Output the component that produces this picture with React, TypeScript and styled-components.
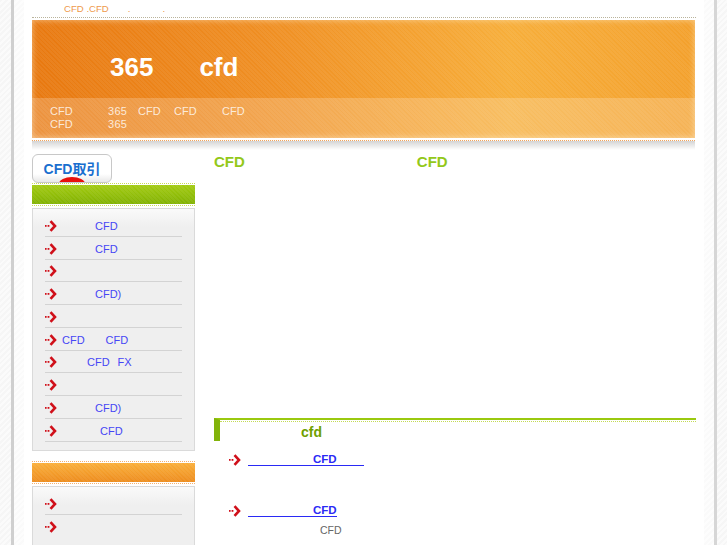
import React from 'react';
import styled, { createGlobalStyle } from 'styled-components';

const GlobalStyle = createGlobalStyle`
  html, body {
    margin: 0;
    padding: 0;
    height: 100%;
    overflow: hidden;
    background: #fff;
    font-family: 'Liberation Sans', Arial, sans-serif;
  }
`;

const stripes =
  'repeating-linear-gradient(45deg, rgba(255,255,255,0) 0 1px, rgba(255,255,255,0.06) 1px 3px)';

const Page = styled.div`
  height: 545px;
  overflow: hidden;
  padding-left: 11px;
  background: repeating-linear-gradient(135deg, #f6f6f6 0 2px, #fbfbfb 2px 4px);
`;

const Frame = styled.div`
  width: 680px;
  height: 545px;
  border-left: 3px solid #cfcfcf;
  border-right: 3px solid #d6d6d6;
  padding: 0 10px;
  background: repeating-linear-gradient(135deg, #fafafa 0 2px, #fdfdfd 2px 4px);
`;

const Inner = styled.div`
  height: 545px;
  padding: 0 9px 0 8px;
  background: #fff;
  box-sizing: border-box;
`;

const TopLine = styled.div`
  height: 17px;
  margin-right: -1px;
  border-bottom: 1px dotted #b9b39b;
  padding-left: 32px;
  font-size: 9.6px;
  line-height: 17px;
  color: #ee9a4d;
  display: flex;
`;

const Dot = styled.span<{ $at: number }>`
  margin-left: ${({ $at }) => $at}px;
`;

const Banner = styled.header`
  margin-top: 2px;
  height: 118px;
  display: flex;
  flex-direction: column;
  background: ${stripes}, linear-gradient(90deg, #e8780f 0%, #ef8e22 35%, #f7ae3a 72%, #f3a02c 100%);
  box-shadow: inset 0 0 6px 0 rgba(255, 236, 205, 0.6);
`;

const BannerTitle = styled.div`
  height: 78px;
  display: flex;
  align-items: center;
  padding: 16px 0 0 78px;
  box-sizing: border-box;
  font-size: 26px;
  font-weight: 700;
  color: #fff;
`;

const TitleGap = styled.span`
  width: 46px;
`;

const BannerNav = styled.nav`
  height: 40px;
  padding: 7px 0 0 18px;
  box-sizing: border-box;
  background: rgba(255, 255, 255, 0.2);
  color: rgba(255, 255, 255, 0.8);
  line-height: 13px;
`;

const NavRow = styled.div`
  display: flex;
`;

const NavItem = styled.span<{ $width: number; $small?: boolean }>`
  width: ${({ $width }) => $width}px;
  font-size: 11px;
  letter-spacing: ${({ $small }) => ($small ? '0.3px' : '0')};
`;

const BannerFoot = styled.div`
  margin-top: 2px;
  height: 9px;
  border-top: 1px dotted #f2a45c;
  background: linear-gradient(#d4d4d4, #fff);
`;

const Columns = styled.div`
  display: flex;
  margin-top: 4px;
`;

const Sidebar = styled.aside`
  width: 163px;
  flex: none;
`;

const Logo = styled.div`
  position: relative;
  width: 78px;
  height: 27px;
  border: 1px solid #c8c8c8;
  border-radius: 6px;
  overflow: hidden;
  background: linear-gradient(#fff 70%, #e8e8e8);
  color: #1a6fcf;
  font-size: 14px;
  font-weight: 700;
  line-height: 29px;
  text-align: center;
  font-family: 'Liberation Sans', 'Noto Sans CJK JP', sans-serif;
`;

const LogoArc = styled.span`
  position: absolute;
  left: 26px;
  bottom: -8px;
  width: 26px;
  height: 13px;
  border-radius: 50%;
  background: #e8100c;
`;

const SideBar = styled.div<{ $tone: 'green' | 'orange' }>`
  height: 19px;
  background: ${stripes},
    ${({ $tone }) =>
      $tone === 'green'
        ? 'linear-gradient(#a4cc12, #7fb000)'
        : 'linear-gradient(#fbb03a, #ec8a1c)'};
  border-top: 1px dotted ${({ $tone }) => ($tone === 'green' ? '#c9dc55' : '#f6b06e')};
  border-bottom: 1px dotted ${({ $tone }) => ($tone === 'green' ? '#c9dc55' : '#f6b06e')};
  padding: 1px 0;
  background-clip: content-box;
`;

const Box = styled.div<{ $height: number }>`
  margin-top: 2px;
  height: ${({ $height }) => $height}px;
  box-sizing: border-box;
  border: 1px solid #dadada;
  background: linear-gradient(#fafafa, #efefef 18px);
  padding: 5px 12px 0;
`;

const OrangeBar = styled(SideBar)`
  margin-top: 10px;
`;

const Row = styled.a<{ $open?: boolean }>`
  height: 22.75px;
  box-sizing: border-box;
  padding-top: 2px;
  display: flex;
  align-items: center;
  border-bottom: 1px solid ${({ $open }) => ($open ? 'transparent' : '#d3d3d3')};
  color: #4646f5;
  font-size: 11px;
  white-space: pre;
`;

const Label = styled.span`
  display: flex;
`;

const Spacer = styled.span<{ $w: number }>`
  width: ${({ $w }) => $w}px;
`;

const Main = styled.main`
  flex: 1;
  padding-left: 19px;
  margin-right: -1px;
`;

const Headlines = styled.div`
  display: flex;
  height: 264px;
  font-size: 15px;
  line-height: 16px;
  font-weight: 700;
  color: #93c81a;
`;

const HeadGap = styled.span`
  width: 172px;
`;

const Section = styled.section`
  position: relative;
  height: 23px;
  border-top: 2px solid #9ac90f;
  border-left: 6px solid #82b30a;
  padding-left: 81px;
  font-size: 14px;
  font-weight: 700;
  line-height: 24px;
  color: #6f9f00;
  box-sizing: border-box;
`;

const SectionDots = styled.span`
  position: absolute;
  left: 0;
  right: 0;
  top: 1px;
  border-top: 1px dotted #c4dc55;
`;

const Entry = styled.div<{ $gap: number }>`
  display: flex;
  align-items: center;
  height: 16px;
  margin: ${({ $gap }) => $gap}px 0 0 15px;
`;

const EntryLink = styled.a<{ $width: number; $indent: number }>`
  width: ${({ $width }) => $width}px;
  box-sizing: border-box;
  margin-left: 7px;
  padding-left: ${({ $indent }) => $indent}px;
  border-bottom: 1px solid #2a2af5;
  font-size: 11.5px;
  font-weight: 700;
  line-height: 11px;
  color: #2a2af5;
`;

const EntryNote = styled.p`
  margin: 4px 0 0 106px;
  font-size: 10.5px;
  line-height: 14px;
  color: #666;
`;

const Arrow = () => (
  <svg width="12" height="12" viewBox="0 0 12 12" style={{ flex: 'none' }}>
    <rect x="0" y="5" width="1.6" height="1.8" fill="#d0101a" />
    <rect x="2.6" y="5" width="1.8" height="1.8" fill="#d0101a" />
    <path d="M5.5 1.2 L10 6 L5.5 10.8" fill="none" stroke="#d0101a" strokeWidth="2.6" />
  </svg>
);

type Part = { gap: number; text: string };

const menuOne: Part[][] = [
  [{ gap: 38, text: 'CFD' }],
  [{ gap: 38, text: 'CFD' }],
  [],
  [{ gap: 38, text: 'CFD)' }],
  [],
  [{ gap: 5, text: 'CFD' }, { gap: 21, text: 'CFD' }],
  [{ gap: 30, text: 'CFD' }, { gap: 8, text: 'FX' }],
  [],
  [{ gap: 38, text: 'CFD)' }],
  [{ gap: 43, text: 'CFD' }],
];

const Menu = ({ rows, openEnd }: { rows: Part[][]; openEnd?: boolean }) => (
  <>
    {rows.map((parts, i) => (
      <Row key={i} $open={openEnd && i === rows.length - 1}>
        <Arrow />
        <Label>
          {parts.map((p, j) => (
            <React.Fragment key={j}>
              <Spacer $w={p.gap} />
              {p.text}
            </React.Fragment>
          ))}
        </Label>
      </Row>
    ))}
  </>
);

export default function App() {
  return (
    <Page>
      <GlobalStyle />
      <Frame>
        <Inner>
          <TopLine>
            CFD .CFD
            <Dot $at={19}>.</Dot>
            <Dot $at={32}>.</Dot>
          </TopLine>
          <Banner>
            <BannerTitle>
              365
              <TitleGap />
              cfd
            </BannerTitle>
            <BannerNav>
              <NavRow>
                <NavItem $width={58}>CFD</NavItem>
                <NavItem $width={30} $small>365</NavItem>
                <NavItem $width={36}>CFD</NavItem>
                <NavItem $width={48}>CFD</NavItem>
                <NavItem $width={30}>CFD</NavItem>
              </NavRow>
              <NavRow>
                <NavItem $width={58}>CFD</NavItem>
                <NavItem $width={30} $small>365</NavItem>
              </NavRow>
            </BannerNav>
          </Banner>
          <BannerFoot />
          <Columns>
            <Sidebar>
              <Logo>
                CFD取引
                <LogoArc />
              </Logo>
              <SideBar $tone="green" />
              <Box $height={243}>
                <Menu rows={menuOne} />
              </Box>
              <OrangeBar $tone="orange" />
              <Box $height={80}>
                <Menu rows={[[], []]} openEnd />
              </Box>
            </Sidebar>
            <Main>
              <Headlines>
                CFD
                <HeadGap />
                CFD
              </Headlines>
              <Section>
                <SectionDots />
                cfd
              </Section>
              <Entry $gap={11}>
                <Arrow />
                <EntryLink $width={116} $indent={65}>CFD</EntryLink>
              </Entry>
              <Entry $gap={35}>
                <Arrow />
                <EntryLink $width={89} $indent={65}>CFD</EntryLink>
              </Entry>
              <EntryNote>CFD</EntryNote>
            </Main>
          </Columns>
        </Inner>
      </Frame>
    </Page>
  );
}
